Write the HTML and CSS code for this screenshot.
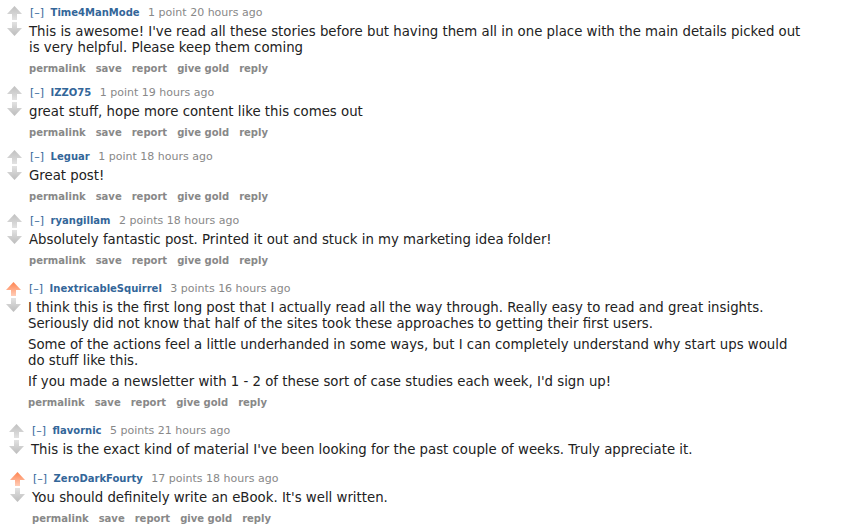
FILE: index.html
```html
<!DOCTYPE html>
<html lang="en">
<head>
  <meta charset="UTF-8" />
  <title>comments</title>
  <link rel="stylesheet" href="styles.css">
</head>
<body>

  <svg width="0" height="0" class="defs">
    <defs>
      <linearGradient id="grayUp" x1="0" y1="0" x2="0" y2="1">
        <stop offset="0" stop-color="#c0c0c0" />
        <stop offset="1" stop-color="#e2e2e2" />
      </linearGradient>
      <linearGradient id="grayDown" x1="0" y1="0" x2="0" y2="1">
        <stop offset="0" stop-color="#e2e2e2" />
        <stop offset="1" stop-color="#bcbcbc" />
      </linearGradient>
      <linearGradient id="orangeUp" x1="0" y1="0" x2="0" y2="1">
        <stop offset="0" stop-color="#ff8450" />
        <stop offset="1" stop-color="#ffcdb8" />
      </linearGradient>
      <symbol id="up" viewBox="0 0 15 14">
        <path d="M7.5 0 L15 8 L10 8 L10 14 L5 14 L5 8 L0 8 Z" />
      </symbol>
      <symbol id="down" viewBox="0 0 15 14">
        <path d="M5 0 L10 0 L10 6 L15 6 L7.5 14 L0 6 L5 6 Z" />
      </symbol>
    </defs>
  </svg>

  <div class="comments">

    <!-- 1 -->
    <div class="comment">
      <div class="midcol">
        <svg class="arrow" fill="url(#grayUp)"><use href="#up" /></svg>
        <svg class="arrow" fill="url(#grayDown)"><use href="#down" /></svg>
      </div>
      <div class="entry">
        <p class="tagline"><a class="expand">[&ndash;]</a> <a class="author">Time4ManMode</a> <span class="score">1 point</span> <span>20 hours ago</span></p>
        <div class="md">
          <p>This is awesome! I've read all these stories before but having them all in one place with the main details picked out is very helpful. Please keep them coming</p>
        </div>
        <ul class="buttons">
          <li>permalink</li><li>save</li><li>report</li><li>give gold</li><li>reply</li>
        </ul>
      </div>
    </div>

    <!-- 2 -->
    <div class="comment">
      <div class="midcol">
        <svg class="arrow" fill="url(#grayUp)"><use href="#up" /></svg>
        <svg class="arrow" fill="url(#grayDown)"><use href="#down" /></svg>
      </div>
      <div class="entry">
        <p class="tagline"><a class="expand">[&ndash;]</a> <a class="author">IZZO75</a> <span class="score">1 point</span> <span>19 hours ago</span></p>
        <div class="md">
          <p>great stuff, hope more content like this comes out</p>
        </div>
        <ul class="buttons">
          <li>permalink</li><li>save</li><li>report</li><li>give gold</li><li>reply</li>
        </ul>
      </div>
    </div>

    <!-- 3 -->
    <div class="comment">
      <div class="midcol">
        <svg class="arrow" fill="url(#grayUp)"><use href="#up" /></svg>
        <svg class="arrow" fill="url(#grayDown)"><use href="#down" /></svg>
      </div>
      <div class="entry">
        <p class="tagline"><a class="expand">[&ndash;]</a> <a class="author">Leguar</a> <span class="score">1 point</span> <span>18 hours ago</span></p>
        <div class="md">
          <p>Great post!</p>
        </div>
        <ul class="buttons">
          <li>permalink</li><li>save</li><li>report</li><li>give gold</li><li>reply</li>
        </ul>
      </div>
    </div>

    <!-- 4 -->
    <div class="comment">
      <div class="midcol">
        <svg class="arrow" fill="url(#grayUp)"><use href="#up" /></svg>
        <svg class="arrow" fill="url(#grayDown)"><use href="#down" /></svg>
      </div>
      <div class="entry">
        <p class="tagline"><a class="expand">[&ndash;]</a> <a class="author">ryangillam</a> <span class="score">2 points</span> <span>18 hours ago</span></p>
        <div class="md">
          <p>Absolutely fantastic post. Printed it out and stuck in my marketing idea folder!</p>
        </div>
        <ul class="buttons">
          <li>permalink</li><li>save</li><li>report</li><li>give gold</li><li>reply</li>
        </ul>
      </div>
    </div>

    <!-- 5 -->
    <div class="comment spaced tight">
      <div class="midcol">
        <svg class="arrow" fill="url(#orangeUp)"><use href="#up" /></svg>
        <svg class="arrow" fill="url(#grayDown)"><use href="#down" /></svg>
      </div>
      <div class="entry">
        <p class="tagline"><a class="expand">[&ndash;]</a> <a class="author">InextricableSquirrel</a> <span class="score">3 points</span> <span>16 hours ago</span></p>
        <div class="md">
          <p>I think this is the first long post that I actually read all the way through. Really easy to read and great insights. Seriously did not know that half of the sites took these approaches to getting their first users.</p>
          <p>Some of the actions feel a little underhanded in some ways, but I can completely understand why start ups would do stuff like this.</p>
          <p>If you made a newsletter with 1 - 2 of these sort of case studies each week, I'd sign up!</p>
        </div>
        <ul class="buttons">
          <li>permalink</li><li>save</li><li>report</li><li>give gold</li><li>reply</li>
        </ul>
      </div>
    </div>

    <!-- 6 -->
    <div class="comment spaced shifted">
      <div class="midcol">
        <svg class="arrow" fill="url(#grayUp)"><use href="#up" /></svg>
        <svg class="arrow" fill="url(#grayDown)"><use href="#down" /></svg>
      </div>
      <div class="entry">
        <p class="tagline"><a class="expand">[&ndash;]</a> <a class="author">flavornic</a> <span class="score">5 points</span> <span>21 hours ago</span></p>
        <div class="md">
          <p>This is the exact kind of material I've been looking for the past couple of weeks. Truly appreciate it.</p>
        </div>
      </div>
    </div>

    <!-- 7 -->
    <div class="comment spaced shifted more">
      <div class="midcol">
        <svg class="arrow" fill="url(#orangeUp)"><use href="#up" /></svg>
        <svg class="arrow" fill="url(#grayDown)"><use href="#down" /></svg>
      </div>
      <div class="entry">
        <p class="tagline"><a class="expand">[&ndash;]</a> <a class="author">ZeroDarkFourty</a> <span class="score">17 points</span> <span>18 hours ago</span></p>
        <div class="md">
          <p>You should definitely write an eBook. It's well written.</p>
        </div>
        <ul class="buttons">
          <li>permalink</li><li>save</li><li>report</li><li>give gold</li><li>reply</li>
        </ul>
      </div>
    </div>

  </div>

</body>
</html>
```

FILE: styles.css
```css
body {
  margin: 0;
  background: #fff;
  font-family: "DejaVu Sans", Verdana, sans-serif;
  color: #222;
}

.defs {
  position: absolute;
}

.comments {
  padding: 6px 0 0 7px;
}

.comment {
  display: flex;
  margin-bottom: 10px;
}

.comment.spaced {
  margin-top: 14px;
}

.comment.tight {
  margin-left: -1px;
}

.comment.shifted {
  margin-left: 2px;
}

.comment.more {
  margin-left: 3px;
}

.midcol {
  width: 15px;
  margin-right: 7px;
  display: flex;
  flex-direction: column;
  gap: 2px;
}

.arrow {
  width: 15px;
  height: 14px;
  display: block;
}

.entry {
  flex: 1;
}

.tagline {
  margin: 0;
  padding-left: 1px;
  font-size: 11px;
  line-height: 14px;
  color: #888;
}

.tagline .expand {
  color: #369;
  margin-right: 3px;
}

.tagline .author {
  color: #369;
  font-size: 10px;
  font-weight: bold;
  margin-right: 5px;
}

.md {
  margin-top: 4px;
  max-width: 775px;
  font-size: 13.3px;
  line-height: 16px;
}

.md p {
  margin: 0 0 5px;
}

.md p:last-child {
  margin-bottom: 0;
}

.buttons {
  list-style: none;
  margin: 6px 0 0;
  padding: 0;
  display: flex;
  gap: 10px;
  font-size: 10px;
  line-height: 14px;
  font-weight: bold;
  color: #888;
}
```
